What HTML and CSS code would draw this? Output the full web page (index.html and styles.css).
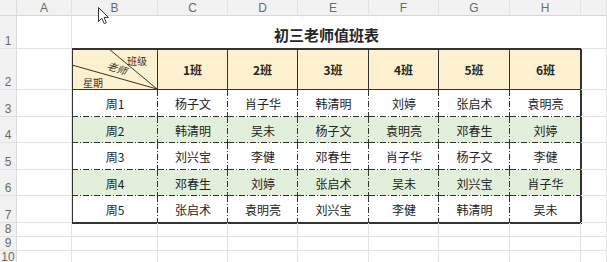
FILE: index.html
```html
<!DOCTYPE html>
<html lang="zh">
<head>
<meta charset="utf-8">
<link rel="stylesheet" href="styles.css">
</head>
<body>
<div class="sheet">
  <div class="corner"></div>
  <div class="colh">A</div><div class="colh">B</div><div class="colh">C</div><div class="colh">D</div><div class="colh">E</div><div class="colh">F</div><div class="colh">G</div><div class="colh">H</div><div class="colh"></div>

  <div class="title">初三老师值班表</div>
  <div class="tbl">
    <div class="diag">
      <svg width="85" height="40" viewBox="0 0 85 40">
        <line x1="37" y1="0" x2="85" y2="40" stroke="#333" stroke-width="1"/>
        <line x1="0" y1="16" x2="85" y2="40" stroke="#333" stroke-width="1"/>
        <text x="55" y="16" class="dt">班级</text>
        <text x="35" y="23" class="dt it" transform="rotate(19 44 19)">老师</text>
        <text x="11" y="38" class="dt">星期</text>
      </svg>
    </div>
    <div class="hd">1班</div><div class="hd">2班</div><div class="hd">3班</div><div class="hd">4班</div><div class="hd">5班</div><div class="hd last">6班</div>

    <div class="c">周1</div><div class="c">杨子文</div><div class="c">肖子华</div><div class="c">韩清明</div><div class="c">刘婷</div><div class="c">张启术</div><div class="c r">袁明亮</div>
    <div class="c alt">周2</div><div class="c alt">韩清明</div><div class="c alt">吴未</div><div class="c alt">杨子文</div><div class="c alt">袁明亮</div><div class="c alt">邓春生</div><div class="c alt r">刘婷</div>
    <div class="c">周3</div><div class="c">刘兴宝</div><div class="c">李健</div><div class="c">邓春生</div><div class="c">肖子华</div><div class="c">杨子文</div><div class="c r">李健</div>
    <div class="c alt">周4</div><div class="c alt">邓春生</div><div class="c alt">刘婷</div><div class="c alt">张启术</div><div class="c alt">吴未</div><div class="c alt">刘兴宝</div><div class="c alt r">肖子华</div>
    <div class="c b">周5</div><div class="c b">张启术</div><div class="c b">袁明亮</div><div class="c b">刘兴宝</div><div class="c b">李健</div><div class="c b">韩清明</div><div class="c b r">吴未</div>
  </div>

  <div class="rowh">1</div><div class="g"></div><div class="g"></div>
  <div class="rowh">2</div><div class="g"></div><div class="g"></div>
  <div class="rowh">3</div><div class="g"></div><div class="g"></div>
  <div class="rowh">4</div><div class="g"></div><div class="g"></div>
  <div class="rowh">5</div><div class="g"></div><div class="g"></div>
  <div class="rowh">6</div><div class="g"></div><div class="g"></div>
  <div class="rowh">7</div><div class="g"></div><div class="g"></div>
  <div class="rowh">8</div><div class="g"></div><div class="g"></div><div class="g"></div><div class="g"></div><div class="g"></div><div class="g"></div><div class="g"></div><div class="g"></div><div class="g"></div>
  <div class="rowh">9</div><div class="g"></div><div class="g"></div><div class="g"></div><div class="g"></div><div class="g"></div><div class="g"></div><div class="g"></div><div class="g"></div><div class="g"></div>
  <div class="rowh">10</div><div class="g"></div><div class="g"></div><div class="g"></div><div class="g"></div><div class="g"></div><div class="g"></div><div class="g"></div><div class="g"></div><div class="g"></div>
</div>
<svg class="cursor" width="13" height="19" viewBox="0 0 13 19">
  <path d="M1.5 1.5 L1.5 15.5 L4.8 12.3 L7.2 17.6 L9.4 16.6 L7 11.4 L11.5 11.4 Z" fill="#fff" stroke="#333" stroke-width="1" stroke-linejoin="round"/>
</svg>
</body>
</html>
```
FILE: styles.css
```css
*{box-sizing:border-box;}
:root{
  --hl:repeating-linear-gradient(90deg,#333 0 6px,transparent 6px 8px,#333 8px 9px,transparent 9px 11px);
  --vl:repeating-linear-gradient(180deg,#333 0 6px,transparent 6px 8px,#333 8px 9px,transparent 9px 11px);
}
html,body{margin:0;background:#fff;}
body{
  width:607px;height:262px;overflow:hidden;position:relative;
  font-family:"Noto Sans CJK SC","Noto Sans",sans-serif;color:#222;
}
.sheet{
  display:grid;
  grid-template-columns:17px 55px 86px 70px 70px 71px 70px 71px 71px 26px;
  grid-template-rows:16px 33px 41px 27px 26px 27px 26px 27px 14px 14px 14px;
}
.corner{background:#f2f2f2;border-right:1px solid #dcdcdc;border-bottom:1px solid #d6d6d6;}
.colh{
  background:#f2f2f2;border-right:1px solid #e2e2e2;border-bottom:1px solid #d6d6d6;
  font:12px "Liberation Sans",Arial,sans-serif;color:#6a6a6a;
  display:flex;align-items:center;justify-content:center;
}
.rowh{
  background:#f2f2f2;border-right:1px solid #dcdcdc;border-bottom:1px solid #e2e2e2;
  font:12px/14px "Liberation Sans",Arial,sans-serif;color:#6a6a6a;
  display:flex;align-items:flex-end;justify-content:center;
}
.g{border-right:1px solid #e3e3e3;border-bottom:1px solid #e3e3e3;}
.title{
  grid-column:3/10;grid-row:2/3;
  display:flex;align-items:center;justify-content:center;
  padding-top:3px;
  font-size:15px;font-weight:700;color:#262626;
}
.tbl{
  grid-column:3/10;grid-row:3/9;
  display:grid;
  grid-template-columns:86px 70px 70px 71px 70px 71px 71px;
  grid-template-rows:41px 27px 26px 27px 26px 27px;
  outline:2px solid #333;outline-offset:-1px;
  font-size:12px;
}
.diag{background:#fdf1d0;border-right:1px solid #333;border-bottom:1px solid #333;}
.diag svg{display:block;}
.dt{font-size:10px;fill:#333;font-family:"Noto Sans CJK SC",sans-serif;}
.it{font-style:italic;}
.hd{
  background:#fdf1d0;border-right:1px solid #333;border-bottom:1px solid #333;
  display:flex;align-items:center;justify-content:center;font-weight:700;color:#262626;
}
.hd.last{border-right:none;}
.c{
  display:flex;align-items:center;justify-content:center;color:#222;
  background-color:#fff;
  background-image:var(--hl),var(--vl);
  background-size:100% 1px,1px 100%;
  background-position:0 100%,100% 0;
  background-repeat:no-repeat;
}
.c.alt{background-color:#e2efda;}
.c.r{background-image:var(--hl),none;}
.c.b{background-image:none,var(--vl);}
.c.b.r{background-image:none,none;}
.cursor{position:absolute;left:97px;top:6px;}
```
